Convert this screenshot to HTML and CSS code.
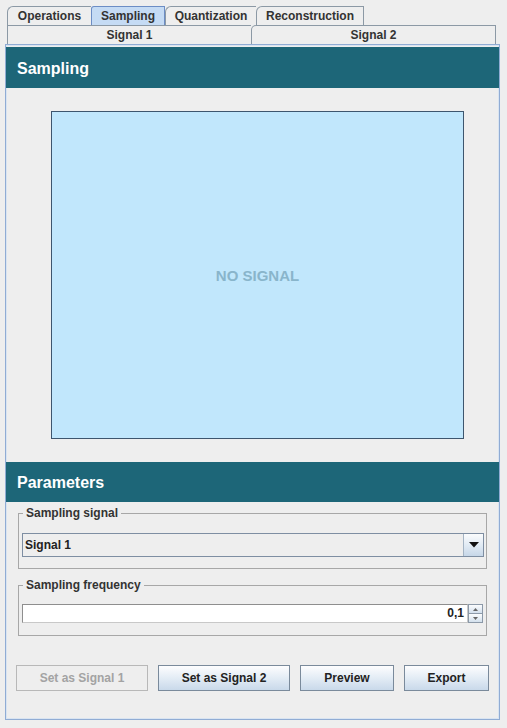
FILE: index.html
```html
<!DOCTYPE html>
<html>
<head>
<meta charset="utf-8">
<link rel="stylesheet" href="styles.css">
</head>
<body>
<div class="tabs-top">
  <div class="tab w-ops">Operations</div>
  <div class="tab w-samp selected">Sampling</div>
  <div class="tab w-quant">Quantization</div>
  <div class="tab w-rec last">Reconstruction</div>
</div>
<div class="tabs-sub">
  <div class="subtab">Signal 1</div>
  <div class="subtab second">Signal 2</div>
</div>
<div class="panel">
  <div class="header">Sampling</div>
  <div class="plot"><span class="nosignal">NO SIGNAL</span></div>
  <div class="header header-params">Parameters</div>
  <fieldset class="group group-signal">
    <legend>Sampling signal</legend>
    <div class="combo">
      <div class="combo-value">Signal 1</div>
      <div class="combo-btn"><svg width="10" height="6" viewBox="0 0 10 6"><path d="M0 0 H10 L5 5.5 Z" fill="#111"/></svg></div>
    </div>
  </fieldset>
  <fieldset class="group group-freq">
    <legend>Sampling frequency</legend>
    <div class="spinner">
      <div class="spin-field">0,1</div>
      <div class="spin-btns">
        <div class="spin-btn"><svg width="5" height="3" viewBox="0 0 5 3"><path d="M0 3 L2.5 0 L5 3 Z" fill="#666"/></svg></div>
        <div class="spin-btn"><svg width="5" height="3" viewBox="0 0 5 3"><path d="M0 0 L2.5 3 L5 0 Z" fill="#666"/></svg></div>
      </div>
    </div>
  </fieldset>
  <div class="buttons">
    <div class="btn disabled b1">Set as Signal 1</div>
    <div class="btn b2">Set as Signal 2</div>
    <div class="btn b3">Preview</div>
    <div class="btn b4">Export</div>
  </div>
</div>
</body>
</html>
```
FILE: styles.css
```css
* { box-sizing: border-box; }
html, body { margin: 0; padding: 0; }
body {
  width: 507px;
  height: 728px;
  background: #eeeeee;
  font-family: "Liberation Sans", Arial, sans-serif;
  font-size: 12px;
  font-weight: bold;
  color: #333333;
  overflow: hidden;
}
.tabs-top {
  display: flex;
  padding: 6px 0 0 7px;
  height: 25px;
}
.tab {
  height: 19px;
  border-top: 1px solid #8c99a5;
  border-left: 1px solid #8c99a5;
  border-top-left-radius: 6px 6px;
  text-align: center;
  line-height: 18px;
  background: #eeeeee;
}
.tab.last { border-right: 1px solid #8c99a5; }
.tab.selected {
  background: #c5dbf4;
  border: 1px solid #6c8dc5;
  border-bottom: none;
  border-top-left-radius: 3px 3px;
}
.w-ops { width: 84px; }
.w-samp { width: 74px; }
.w-quant { width: 91px; }
.w-rec { width: 108px; }
.tabs-sub {
  display: flex;
  margin-left: 7px;
  width: 489px;
  height: 19px;
}
.subtab {
  flex: 1;
  border: 1px solid #8c99a5;
  border-bottom: none;
  border-right: none;
  text-align: center;
  line-height: 18px;
}
.subtab.second {
  border-right: 1px solid #8c99a5;
  border-top-left-radius: 5px 5px;
}
.panel {
  margin-left: 5px;
  width: 495px;
  height: 676px;
  border: 1px solid #90acd4;
  box-shadow: inset 0 0 0 1px #d9e4f1;
  padding-top: 2px;
  display: flex;
  flex-direction: column;
}
.header {
  height: 41px;
  background: #1d6678;
  color: #ffffff;
  font-size: 16px;
  line-height: 43px;
  padding-left: 11px;
}
.header-params {
  height: 40px;
  line-height: 41px;
  margin-top: 23px;
}
.plot {
  margin: 23px 0 0 45px;
  width: 413px;
  height: 328px;
  background: #c1e7fc;
  border: 1px solid #3e566e;
  display: flex;
  align-items: center;
  justify-content: center;
}
.nosignal {
  color: #89b5cb;
  font-size: 15px;
  padding-top: 1px;
}
.group {
  margin: 4px 12px 0 12px;
  border: 1px solid #a7a7a7;
  padding: 13px 2px 11px 3px;
  min-width: 0;
}
.group legend {
  padding: 0 3px;
  margin-left: 1px;
  line-height: 14px;
  color: #333333;
}
.group-freq {
  margin-top: 9px;
  padding-top: 12px;
  padding-bottom: 12px;
}
.combo {
  display: flex;
  width: 462px;
  height: 24px;
  border: 1px solid #7e8ea2;
  background: #eeeeee;
}
.combo-value {
  flex: 1;
  padding-left: 2px;
  line-height: 22px;
  color: #222222;
  border-right: 1px solid #a5b4c4;
}
.combo-btn {
  width: 19px;
  display: flex;
  align-items: center;
  justify-content: center;
  background: linear-gradient(#fbfcfd, #dfe9f3 55%, #c7d7e8);
}
.spinner {
  display: flex;
  width: 461px;
  height: 19px;
}
.spin-field {
  flex: 1;
  background: #ffffff;
  border: 1px solid #8e8e8e;
  border-right: 1px solid #c8c8c8;
  border-bottom-color: #c8c8c8;
  text-align: right;
  padding-right: 3px;
  line-height: 17px;
  color: #222222;
}
.spin-btns {
  width: 15px;
  display: flex;
  flex-direction: column;
  border: 1px solid #8c99a8;
}
.spin-btn {
  flex: 1;
  display: flex;
  align-items: center;
  justify-content: center;
  background: linear-gradient(#fbfcfd, #d3e0ed);
}
.spin-btn + .spin-btn { border-top: 1px solid #8c99a8; }
.buttons {
  display: flex;
  gap: 10px;
  margin: 29px 0 0 10px;
}
.btn {
  height: 26px;
  border: 1px solid #7a8a9b;
  background: linear-gradient(#fdfdfe, #e3ecf5 50%, #c9d9ea);
  text-align: center;
  line-height: 25px;
  color: #222222;
}
.btn.disabled {
  background: #eeeeee;
  border-color: #b8b8b8;
  color: #a3a3a3;
}
.b1 { width: 132px; }
.b2 { width: 132px; }
.b3 { width: 94px; }
.b4 { width: 85px; }
```
